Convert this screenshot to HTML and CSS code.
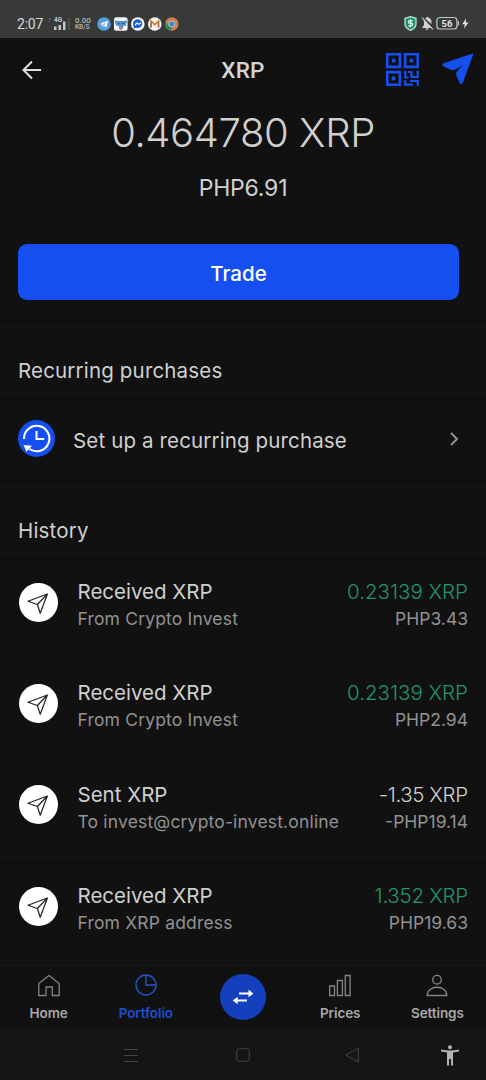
FILE: index.html
```
<!DOCTYPE html>
<html lang="en">
<head>
<meta charset="utf-8">
<title>XRP</title>
<link rel="stylesheet" href="styles.css">
</head>
<body>
<svg width="0" height="0" class="defs">
  <symbol id="plane" viewBox="0 0 39 39">
    <circle cx="19.5" cy="19.5" r="19.5" fill="#fff"/>
    <path d="M28.4 11 9 18.3l9.4 3.2L21.2 30.3ZM28.4 11 18.4 21.5" fill="none" stroke="#222" stroke-width="1.2" stroke-linejoin="round"/>
  </symbol>
</svg>
<div class="screen">
  <div class="status">
    <span class="time">2:07</span>
    <svg class="signal" width="22" height="16" viewBox="0 0 22 16" fill="#c4c6c5">
      <text x="5" y="6" class="tiny">4G</text>
      <path d="M0 2h1.5v1.5H0ZM0 5h1v1H0Z" opacity=".5"/>
      <path d="M5 10.500h2.500V14H5ZM9.500 9H12v5H9.500ZM14 5.500h2.500V14H14Z"/>
      <path d="M19.500 2h1v12h-1Z" opacity=".3"/>
    </svg>
    <span class="speed"><b>0.00</b><b class="unit">KB/S</b></span>
    <svg class="apps" width="82" height="14" viewBox="0 0 82 14">
      <circle cx="7" cy="7" r="6.800" fill="#559fe0"/><path d="M2.800 7 11 3.500 9.500 10.800 6.800 8.800 5.500 10.300 5.300 7.800Z" fill="#fff"/><path d="M5.500 8 9.500 5 6.800 8.500Z" fill="#559fe0"/>
      <rect x="17" y=".2" width="13.600" height="13.600" rx="2.500" fill="#f5f7fa"/><path d="M17.500 3.500 21 4h5.500l3.500-.5-1 5-2.500.5-1 3h-3l-1-3-2.500-.5Z" fill="#4e92d6"/><path d="M22.800 8.500h2v4.500h-2Z" fill="#b98563"/><path d="M21 6h1.500v1H21ZM25.500 6H27v1h-1.500Z" fill="#234c83"/>
      <circle cx="40.800" cy="7" r="6.800" fill="#fff"/><path d="M40.800 2.300a4.800 4.400 0 1 1-2 8.500L36.500 12l.3-2.300A4.600 4.600 0 0 1 40.800 2.300Z" fill="#1762df"/><path d="m38 8 2-2 1.800 1.400L44 6" fill="none" stroke="#fff" stroke-width="1.100"/>
      <circle cx="57.800" cy="7" r="6.800" fill="#f7f4f0"/><path d="M54 10.500V4l3.800 3.800L61.600 4v6.500" fill="none" stroke="#c67d45" stroke-width="1.700"/><path d="M54.200 5.500v5M61.400 5.500v5" stroke="#a7683b" stroke-width="1"/>
      <circle cx="74.800" cy="7" r="6.800" fill="#d07e4a"/><path d="M68.500 4.500 72 9l3 1.800-2 2.900A6.800 6.800 0 0 1 68.500 4.500Z" fill="#258c5b"/><circle cx="74.800" cy="7" r="3.300" fill="#b9c9d6"/><circle cx="74.800" cy="7" r="2.500" fill="#3684d6"/>
    </svg>
    <svg class="alerts" width="66" height="15" viewBox="0 0 66 15">
      <path d="M6.500.7 12 2.300v6c0 3-2.500 4.800-5.500 6C3.500 13.100 1 11.300 1 8.300v-6Z" fill="#18946a" stroke="#bfe0d3" stroke-width="1.300"/>
      <path d="M8.800 4.700H5.900c-2 0-2 2.500 0 2.500h1.300c2 0 2 2.600 0 2.600H4.200M6.500 3.300v8" fill="none" stroke="#e5f4ee" stroke-width="1.200"/>
      <path d="M19 3 28 12H18.500V11l1.500-2V5.500ZM21 2.500l1.500-.8a1 1 0 0 1 2 0C27 2.500 27.500 4 27.500 6v2ZM21.500 12.500h3a1.500 1.500 0 0 1-3 0Z" fill="#d0d2d1"/><path d="m18 1.500 11 12" stroke="#d0d2d1" stroke-width="1.100"/>
      <rect x="32.900" y="1.500" width="20" height="11.500" rx="3" fill="none" stroke="#c4c6c5" stroke-width="1.200"/><path d="M53.800 5h1.200v4.500h-1.200Z" fill="#c4c6c5"/>
      <text x="43" y="10.500" text-anchor="middle" class="pct" fill="#e2e3e2">56</text>
      <path d="M62 2.500 58.200 8.200h2.600L60 12.500l4.500-6h-2.800Z" fill="#e2e3e2"/>
    </svg>
  </div>

  <header class="bar">
    <svg class="back" width="20" height="20" viewBox="0 0 20 20" fill="none" stroke="#dedede" stroke-width="2.100"><path d="M19 10H2M10 1.500 1.500 10l8.500 8.500"/></svg>
    <h1>XRP</h1>
    <div class="actions">
      <svg width="33" height="33" viewBox="0 0 33 33" fill="none" stroke="#164ff0" stroke-width="2.600">
        <path d="M1.300 1.300h12.600v12.600H1.300ZM19.100 1.300h12.600v12.600H19.100ZM1.300 19.100h12.600v12.600H1.300Z"/>
        <path d="M5.800 5.800h3.600v3.600H5.800ZM23.600 5.800h3.600v3.600h-3.600ZM5.800 23.600h3.600v3.600H5.800Z" fill="#164ff0" stroke="none"/>
        <path d="M31.700 17.800V24H25.500V19H22M19.200 17.800V24.500H22.500M19.200 27.200V31.700H27M24 28H31.700V33" stroke-width="2.200"/>
      </svg>
      <svg width="32" height="32" viewBox="0 0 32 32" fill="#164ff0"><path d="M30.800.6Q31.500.3 31.300 1.300L20.800 29.800Q19.500 32.300 17.800 30.200L14 21.500Q13.500 19.500 21 11.800 13 17.500 10 17.300L1.500 13.500Q-.5 11.500 1.500 10.300Z"/></svg>
    </div>
  </header>

  <section class="balance">
    <div class="amount">0.464780 XRP</div>
    <div class="fiat">PHP6.91</div>
    <button class="trade">Trade</button>
  </section>

  <h2>Recurring purchases</h2>
  <div class="recurring">
    <svg width="37" height="37" viewBox="0 0 37 37"><circle cx="18.500" cy="18.500" r="18.500" fill="#164ff0"/><path d="M6 19A12.700 12.700 0 1 1 11.500 29" fill="none" stroke="#fff" stroke-width="2.100"/><path d="M18.500 11v8h7.800" fill="none" stroke="#fff" stroke-width="2"/><path d="m5.500 25 8.500.8-5.500 6Z" fill="#fff"/></svg>
    <span>Set up a recurring purchase</span>
    <svg class="chev" width="9" height="14" viewBox="0 0 9 14" fill="none" stroke="#929292" stroke-width="2"><path d="m1 1 6 6-6 6"/></svg>
  </div>

  <h2>History</h2>
  <div class="list">
    <div class="row"><svg width="39" height="39"><use href="#plane"/></svg><div class="what"><div class="title">Received XRP</div><div class="sub from">From Crypto Invest</div></div><div class="value"><div class="coin up">0.23139 XRP</div><div class="sub">PHP3.43</div></div></div>
    <div class="row"><svg width="39" height="39"><use href="#plane"/></svg><div class="what"><div class="title">Received XRP</div><div class="sub from">From Crypto Invest</div></div><div class="value"><div class="coin up">0.23139 XRP</div><div class="sub">PHP2.94</div></div></div>
    <div class="row"><svg width="39" height="39"><use href="#plane"/></svg><div class="what"><div class="title">Sent XRP</div><div class="sub from">To invest@crypto-invest.online</div></div><div class="value"><div class="coin tight">-1.35 XRP</div><div class="sub">-PHP19.14</div></div></div>
    <div class="row"><svg width="39" height="39"><use href="#plane"/></svg><div class="what"><div class="title">Received XRP</div><div class="sub from">From XRP address</div></div><div class="value"><div class="coin up snug">1.352 XRP</div><div class="sub">PHP19.63</div></div></div>
  </div>

  <nav class="tabs">
    <div class="tab"><svg width="24" height="24" viewBox="0 0 24 24" fill="none" stroke="#858585" stroke-width="1.300"><path d="M1.800 9.500 12 1.500 22.200 9.500v12h-6.900v-8.500H9V21.500H1.800Z"/></svg><span>Home</span></div>
    <div class="tab on"><svg width="24" height="24" viewBox="0 0 24 24" fill="none" stroke="#2254cb" stroke-width="1.400"><circle cx="12" cy="11" r="10"/><path d="M12 1v10h10"/></svg><span>Portfolio</span></div>
    <div class="tab"><svg class="swap" width="46" height="46" viewBox="0 0 46 46"><circle cx="23" cy="23" r="23" fill="#1440bd"/><path d="M19 19.500h10M17 26.500h10" stroke="#fff" stroke-width="1.800"/><path d="m28.500 15.800 5 3.700-5 3.700ZM17.700 22.800l-5 3.700 5 3.700Z" fill="#fff"/></svg></div>
    <div class="tab"><svg width="24" height="24" viewBox="0 0 24 24" fill="none" stroke="#858585" stroke-width="1.300"><path d="M1.700 12h4.800v9.500H1.700ZM9.400 6.500h5v15h-5ZM17.300 1.500h4.800v20h-4.800Z"/></svg><span>Prices</span></div>
    <div class="tab"><svg width="24" height="24" viewBox="0 0 24 24" fill="none" stroke="#858585" stroke-width="1.300"><circle cx="12" cy="5.700" r="4.300"/><path d="M2.200 21.500C2.200 10.500 21.800 10.500 21.800 21.500Z"/></svg><span>Settings</span></div>
  </nav>

  <div class="system">
    <svg width="14" height="14" viewBox="0 0 14 14" stroke="#454545" fill="none"><path d="M0 1.500h14M0 7.500h14M0 13.500h14"/></svg>
    <svg width="14" height="14" viewBox="0 0 14 14" stroke="#454545" fill="none"><rect x=".7" y=".7" width="12.600" height="12.600" rx="2.500"/></svg>
    <svg width="14" height="16" viewBox="0 0 14 16" stroke="#454545" fill="none"><path d="M13.300 1v14L.8 8Z" stroke-linejoin="round"/></svg>
    <svg width="18" height="21" viewBox="0 0 18 21" fill="#b4b4b4"><circle cx="9" cy="2.300" r="2"/><path d="M0 4.500Q9 6.500 18 4.500V6.500L12 7.500V20.500H10V14H8V20.500H6V7.500L0 6.500Z"/></svg>
  </div>
</div>
</body>
</html>
```
FILE: styles.css
```
* { box-sizing: border-box; }
body { margin: 0; background: #111; }
.defs { position: absolute; }
svg { display: block; flex: none; }
.screen {
  width: 486px; height: 1080px; overflow: hidden;
  display: flex; flex-direction: column;
  background: #111; color: #d0d0d0;
  font-family: Inter, "Liberation Sans", sans-serif;
}
.status {
  height: 38px; flex: none; padding: 9px 16px 0 17px;
  display: flex; align-items: center; background: #383a39;
}
.time { width: 32px; font: 400 14px Roboto, sans-serif; letter-spacing: -.2px; color: #d6d8d7; padding-top: 1px; }
.tiny { font: 700 6.500px Roboto, sans-serif; }
.pct { font: 700 9.500px Roboto, sans-serif; }
.speed { width: 22px; margin-left: 4px; display: flex; flex-direction: column; font: 500 8px/7px Roboto, sans-serif; color: #b5b7b6; }
.speed b { font-weight: 500; }
.speed .unit { font-size: 6.500px; }
.alerts { margin-left: auto; }

.bar { height: 64px; flex: none; padding: 0 12px 0 22px; display: grid; grid-template-columns: 80px 1fr 90px; align-items: center; }
h1 { margin: 0; text-align: center; font: 500 22.500px/28px Roboto, sans-serif; color: #d4d4d4; letter-spacing: .2px; }
.actions { display: flex; gap: 23px; justify-content: flex-end; margin-top: -1px; }

.balance { height: 224px; flex: none; display: flex; flex-direction: column; align-items: center; }
.amount { margin-top: 6px; font-size: 40px; line-height: 50px; font-weight: 300; letter-spacing: -.4px; }
.fiat { margin-top: 15px; font-size: 23px; line-height: 30px; letter-spacing: -.2px; }
.trade {
  margin: 41px 27px 0 18px; padding: 3px 0 0; align-self: stretch; height: 56px; border: 0; border-radius: 9px;
  background: #164ff0; color: #fff; font: 500 20.500px Inter, sans-serif;
}

h2 {
  margin: 0; padding: 23px 18px 0; height: 67px; flex: none;
  border-top: 1px solid #171717; border-bottom: 1px solid #171717;
  font-size: 20.500px; line-height: 41px; font-weight: 400; letter-spacing: .17px;
}
.recurring { height: 93px; flex: none; padding: 0 27px 2px 18px; display: flex; align-items: center; font-size: 20.500px; letter-spacing: .14px; }
.recurring span { margin: 4px 0 0 18px; }
.chev { margin-left: auto; }

.list { flex: none; height: 412px; }
.row { height: 101.300px; padding: 0 18px 2px 19px; display: flex; align-items: center; border-bottom: 1px solid #171717; }
.row:last-child { border-bottom-color: transparent; }
.what { margin-left: 20px; flex: 1; padding-top: 7px; }
.value { text-align: right; padding-top: 7px; }
.title, .coin { font-size: 20.500px; line-height: 26px; white-space: nowrap; }
.title { margin-left: -.5px; }
.coin { font-weight: 300; }
.tight { letter-spacing: -.4px; margin-right: .4px; }
.snug { letter-spacing: -.25px; }
.up { color: #229469; }
.sub { font-size: 17.500px; line-height: 27px; color: #929292; white-space: nowrap; }
.from { letter-spacing: .17px; margin-left: -.5px; }

.tabs { height: 65px; flex: none; display: grid; grid-template-columns: repeat(5, 1fr); border-top: 1px solid #191919; }
.tab { display: flex; flex-direction: column; align-items: center; padding-top: 8px; font-size: 13.500px; font-weight: 600; color: #a8a8a8; }
.tab span { margin-top: 7px; line-height: 17px; letter-spacing: -.1px; }
.tab.on { color: #1c4fd0; }
.system { height: 50px; flex: none; padding: 0 27px 0 124px; display: grid; grid-template-columns: 112px 109px 1fr 18px; align-items: center; background: #151515; }
```
